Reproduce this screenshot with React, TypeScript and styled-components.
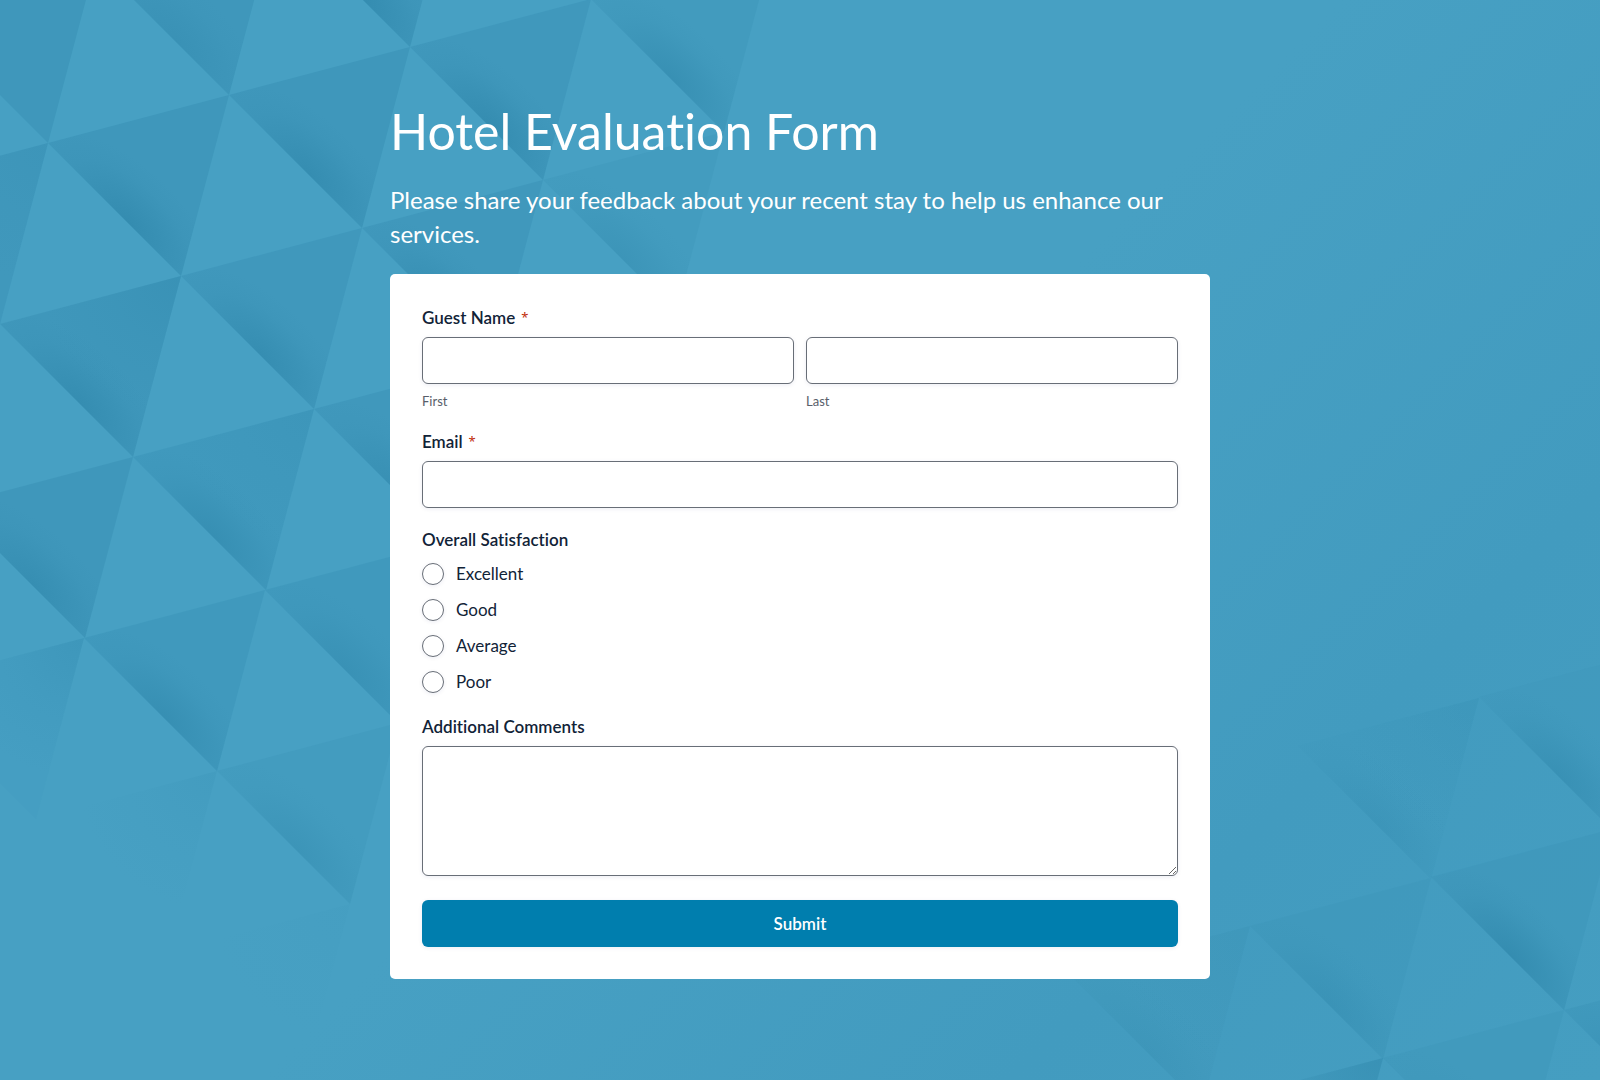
import React, { useId } from "react";
import styled, { createGlobalStyle } from "styled-components";

const ink = "#112337";
const muted = "#585e6a";
const line = "#686e77";

const GlobalStyle = createGlobalStyle`
  *, *::before, *::after { box-sizing: border-box; }
  body {
    margin: 0;
    font-family: Lato, "Noto Sans", sans-serif;
    font-variant-ligatures: none;
    color: ${ink};
    background: #46a0c2;
  }
`;

const Page = styled.div`
  position: relative;
  isolation: isolate;
  min-height: 100vh;
  padding: 99px 24px;
  background: linear-gradient(135deg, #47a0c3 50%, #429bbf 78%, #459ec1 100%);
`;

const Backdrop = styled.svg`
  position: absolute;
  inset: 0;
  z-index: -1;
  width: 100%;
  height: 100%;
`;

const Content = styled.main`
  width: 100%;
  max-width: 820px;
  margin: 0 auto;
`;

const Header = styled.header`
  display: grid;
  gap: 20px;
  margin-bottom: 23px;
  color: #fff;
`;

const Title = styled.h1`
  margin: 0;
  font-size: 50px;
  font-weight: 400;
  line-height: 64px;
`;

const Intro = styled.p`
  margin: 0;
  font-size: 24px;
  line-height: 34px;
`;

const Card = styled.form`
  display: grid;
  gap: 20px;
  padding: 32px;
  border-radius: 5px;
  background: #fff;
`;

const Group = styled.fieldset`
  min-width: 0;
  margin: 0;
  padding: 0;
  border: 0;
`;

const Field = styled.div`
  display: grid;
`;

const labelText = `
  display: flex;
  gap: 6px;
  margin-bottom: 8px;
  padding: 0;
  font-size: 17px;
  font-weight: 600;
  line-height: 23px;
`;

const Label = styled.label`
  ${labelText}
`;

const Legend = styled.legend`
  ${labelText}
`;

const Star = styled.span`
  font-family: "Noto Sans", sans-serif;
  font-size: 13px;
  font-weight: 400;
  color: #c02b0a;
`;

const NameRow = styled.div`
  display: grid;
  grid-template-columns: 1fr 1fr;
  gap: 12px;
`;

const Caption = styled.label`
  margin-top: 8px;
  font-size: 13px;
  line-height: 18px;
  color: ${muted};
`;

const box = `
  width: 100%;
  margin: 0;
  border: 1px solid ${line};
  border-radius: 6px;
  background: #fff;
  color: ${ink};
  font: inherit;
  box-shadow: 0 1px 4px rgba(18, 25, 97, 0.08);
`;

const TextInput = styled.input`
  ${box}
  height: 47px;
  padding: 0 12px;
`;

const TextArea = styled.textarea`
  ${box}
  display: block;
  height: 130px;
  padding: 12px;
  resize: vertical;
`;

const Options = styled.div`
  display: grid;
  gap: 9px;
  padding-top: 1px;
`;

const Option = styled.label`
  display: flex;
  align-items: center;
  gap: 12px;
  font-size: 17px;
  line-height: 27px;
`;

const Radio = styled.input`
  appearance: none;
  width: 22px;
  height: 22px;
  margin: 0;
  border: 1px solid ${line};
  border-radius: 50%;
  background: #fff;
  box-shadow: 0 1px 4px rgba(18, 25, 97, 0.08);

  &:checked {
    background: radial-gradient(circle, #007eae 5px, #fff 6px);
  }
`;

const Submit = styled.button`
  height: 47px;
  margin-top: 4px;
  border: 0;
  border-radius: 6px;
  background: #007eae;
  color: #fff;
  font: inherit;
  font-size: 17px;
  font-weight: 600;
  cursor: pointer;
  box-shadow: 0 1px 4px rgba(18, 25, 97, 0.08);
`;

/* x, y of the apex, then strength of the flat tint, the fold shadow and the right corner */
type Facet = [number, number, number, number, number];

const facets: Facet[] = [
  [-85, 10, 1, 0, 0],
  [96, -38, 1, 0.5, 0],
  [277, -86, 1, 1, 0],
  [-133, 191, 0.9, 0, 0.3],
  [48, 143, 1, 1, 0],
  [229, 95, 1, 0.9, 0],
  [410, 47, 0.9, 1, 0],
  [591, -1, 0.6, 0.8, 0],
  [0, 324, 0.95, 0.9, 0.6],
  [181, 276, 0.9, 0.9, 0],
  [362, 228, 0.9, 0.9, 0],
  [543, 180, 0.5, 0.5, 0],
  [-48, 505, 0.95, 0.8, 0],
  [133, 457, 0.8, 0.8, 0.3],
  [314, 409, 0.9, 0.7, 0],
  [-97, 686, 0.1, 0, 0.5],
  [84, 638, 0.8, 0.8, 0],
  [265, 590, 0.8, 0.6, 0],
  [36, 819, 0, 0, 0.25],
  [217, 771, 0.5, 0.5, 0],
  [169, 952, 0, 0, 0.1],
  [1479, 697, 0.5, 0.7, 0],
  [1298, 746, 0.15, 0.4, 0.3],
  [1431, 877, 0.7, 1, 0],
  [1250, 926, 0.6, 0.5, 0],
  [1069, 974, 0.2, 0.3, 0.2],
  [1612, 829, 0.7, 0, 0],
  [1564, 1010, 0.7, 0.9, 0],
  [1383, 1058, 0.6, 0.4, 0],
  [1202, 1106, 0.2, 0, 0.8],
];

function Facets() {
  const id = useId();
  const fold = `${id}fold`;
  const corner = `${id}corner`;
  const path = "M0 0L181 -48L133 133Z";
  return (
    <Backdrop viewBox="0 0 1600 1080" preserveAspectRatio="xMidYMid slice" aria-hidden="true">
      <defs>
        <radialGradient
          id={fold}
          gradientUnits="userSpaceOnUse"
          cx="0"
          cy="0"
          r="1"
          gradientTransform="translate(80 80) rotate(45) scale(115 54)"
        >
          <stop offset="0" stopColor="#2f87ab" stopOpacity="0.7" />
          <stop offset="0.35" stopColor="#2f87ab" stopOpacity="0.42" />
          <stop offset="0.7" stopColor="#2f87ab" stopOpacity="0.12" />
          <stop offset="1" stopColor="#2f87ab" stopOpacity="0" />
        </radialGradient>
        <radialGradient id={corner} gradientUnits="userSpaceOnUse" cx="176" cy="-43" r="135">
          <stop offset="0" stopColor="#348db1" stopOpacity="0.8" />
          <stop offset="0.5" stopColor="#348db1" stopOpacity="0.3" />
          <stop offset="1" stopColor="#348db1" stopOpacity="0" />
        </radialGradient>
      </defs>
      {facets.map(([x, y, tint, shade, edge]) => (
        <g key={`${x},${y}`} transform={`translate(${x} ${y})`}>
          <path d={path} fill="#3f97bb" opacity={tint} />
          <path d={path} fill={`url(#${fold})`} opacity={shade} />
          <path d={path} fill={`url(#${corner})`} opacity={edge} />
        </g>
      ))}
    </Backdrop>
  );
}

const ratings = ["Excellent", "Good", "Average", "Poor"];

export default function App() {
  return (
    <>
      <GlobalStyle />
      <Page>
        <Facets />
        <Content>
          <Header>
            <Title>Hotel Evaluation Form</Title>
            <Intro>Please share your feedback about your recent stay to help us enhance our services.</Intro>
          </Header>
          <Card onSubmit={(event: React.FormEvent) => event.preventDefault()}>
            <Group>
              <Legend>
                Guest Name <Star>*</Star>
              </Legend>
              <NameRow>
                <Field>
                  <TextInput id="first" type="text" required />
                  <Caption htmlFor="first">First</Caption>
                </Field>
                <Field>
                  <TextInput id="last" type="text" required />
                  <Caption htmlFor="last">Last</Caption>
                </Field>
              </NameRow>
            </Group>
            <Field>
              <Label htmlFor="email">
                Email <Star>*</Star>
              </Label>
              <TextInput id="email" type="email" required />
            </Field>
            <Group>
              <Legend>Overall Satisfaction</Legend>
              <Options>
                {ratings.map((rating) => (
                  <Option key={rating}>
                    <Radio type="radio" name="satisfaction" value={rating} />
                    {rating}
                  </Option>
                ))}
              </Options>
            </Group>
            <Field>
              <Label htmlFor="comments">Additional Comments</Label>
              <TextArea id="comments" />
            </Field>
            <Submit type="submit">Submit</Submit>
          </Card>
        </Content>
      </Page>
    </>
  );
}
